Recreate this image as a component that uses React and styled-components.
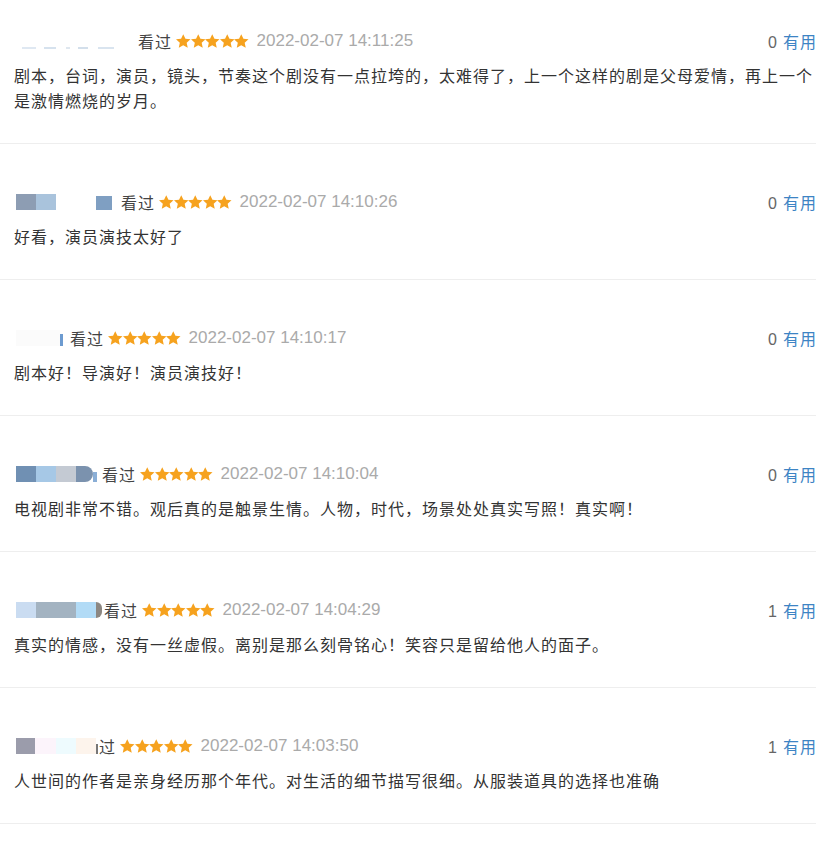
import React from 'react';
import styled, { createGlobalStyle } from 'styled-components';

const GlobalStyle = createGlobalStyle`
  html, body {
    margin: 0;
    padding: 0;
    background: #fff;
    overflow: hidden;
  }
  body {
    font-family: "Liberation Sans", "Noto Sans CJK SC", sans-serif;
  }
`;

const Page = styled.div`
  width: 832px;
  height: 845px;
  overflow: hidden;
`;

const List = styled.ul`
  list-style: none;
  margin: -17px 0 0 0;
  padding: 0;
`;

const Item = styled.li`
  width: 802px;
  padding: 48px 0 30px 14px;
  border-bottom: 1px solid #eeeeee;
`;

const Header = styled.div`
  display: flex;
  align-items: center;
  height: 20px;
`;

const Mosaic = styled.span`
  display: flex;
  align-items: flex-end;
  height: 16px;
  margin-left: 2px;
`;

const Cell = styled.span`
  display: block;
  height: ${(p) => p.$h || 16}px;
  background: ${(p) => p.$c};
  border-radius: ${(p) => (p.$round ? '0 8px 8px 0' : '0')};
`;

const Label = styled.span`
  font-family: "Noto Sans CJK SC", sans-serif;
  font-size: 16px;
  letter-spacing: 1px;
  color: #444;
  margin-left: ${(p) => p.$offset || 8}px;
`;

const Stars = styled.span`
  display: flex;
  margin-left: 4px;
  svg {
    width: 14.5px;
    height: 14.5px;
    display: block;
  }
`;

const Time = styled.span`
  font-size: 17px;
  color: #aaaaaa;
  margin-left: 8px;
`;

const Useful = styled.span`
  margin-left: auto;
  font-size: 16px;
  color: #666;
  display: flex;
  align-items: baseline;
  gap: 6px;
`;

const UsefulLink = styled.a`
  font-family: "Noto Sans CJK SC", sans-serif;
  letter-spacing: 1px;
  margin-right: -1px;
  color: #3d84c4;
  text-decoration: none;
`;

const Content = styled.p`
  margin: 12px 0 0 0;
  font-family: "Noto Sans CJK SC", sans-serif;
  font-size: 16px;
  letter-spacing: 1px;
  line-height: 25px;
  color: #333;
`;

const Star = () => (
  <svg viewBox="1 1 22 22">
    <polygon
      fill="#f6a21e"
      points="12,1.2 15.3,8.2 23,9 17.2,14.2 18.8,22 12,18 5.2,22 6.8,14.2 1,9 8.7,8.2"
    />
  </svg>
);

const comments = [
  {
    cells: [
      [6, '#fff'], [14, '#dfe8f2', 2], [8, '#fff'], [12, '#d6e2ee', 2], [10, '#fff'],
      [4, '#dfe7ef', 2], [8, '#fff'], [10, '#d3dfeb', 2], [10, '#fff'], [16, '#d9e4ef', 2], [14, '#fff'],
    ],
    offset: 10,
    label: '看过',
    time: '2022-02-07 14:11:25',
    votes: 0,
    text: '剧本，台词，演员，镜头，节奏这个剧没有一点拉垮的，太难得了，上一个这样的剧是父母爱情，再上一个是激情燃烧的岁月。',
  },
  {
    cells: [[20, '#8d9db3'], [20, '#a9c3dc'], [40, '#fff'], [16, '#7f9fc2', 14]],
    offset: 9,
    label: '看过',
    time: '2022-02-07 14:10:26',
    votes: 0,
    text: '好看，演员演技太好了',
  },
  {
    cells: [[44, '#fbfbfb'], [3, '#6d9bd0', 12]],
    offset: 7,
    label: '看过',
    time: '2022-02-07 14:10:17',
    votes: 0,
    text: '剧本好！导演好！演员演技好！',
  },
  {
    cells: [[20, '#7090b3'], [20, '#a6c8e6'], [20, '#c4cad3'], [17, '#7b92ae', 16, true], [4, '#8aaed6', 10]],
    offset: 5,
    label: '看过',
    time: '2022-02-07 14:10:04',
    votes: 0,
    text: '电视剧非常不错。观后真的是触景生情。人物，时代，场景处处真实写照！真实啊！',
  },
  {
    cells: [[20, '#cadcf1'], [40, '#a3b3c1'], [20, '#b2dbf6'], [6, '#8c8782', 16, true]],
    offset: 2,
    label: '看过',
    time: '2022-02-07 14:04:29',
    votes: 1,
    text: '真实的情感，没有一丝虚假。离别是那么刻骨铭心！笑容只是留给他人的面子。',
  },
  {
    cells: [[19, '#9b9cab'], [21, '#fcf4fb'], [20, '#eefbfe'], [20, '#fdf4ec'], [2, '#777', 10]],
    offset: 1,
    label: '过',
    time: '2022-02-07 14:03:50',
    votes: 1,
    text: '人世间的作者是亲身经历那个年代。对生活的细节描写很细。从服装道具的选择也准确',
  },
];

export default function App() {
  return (
    <Page>
      <GlobalStyle />
      <List>
        {comments.map((c) => (
          <Item key={c.time}>
            <Header>
              <Mosaic>
                {c.cells.map(([w, color, h, round], i) => (
                  <Cell key={i} style={{ width: w }} $c={color} $h={h} $round={round} />
                ))}
              </Mosaic>
              <Label $offset={c.offset}>{c.label}</Label>
              <Stars>
                {[0, 1, 2, 3, 4].map((i) => (
                  <Star key={i} />
                ))}
              </Stars>
              <Time>{c.time}</Time>
              <Useful>
                {c.votes}
                <UsefulLink href="#">有用</UsefulLink>
              </Useful>
            </Header>
            <Content>{c.text}</Content>
          </Item>
        ))}
      </List>
    </Page>
  );
}
